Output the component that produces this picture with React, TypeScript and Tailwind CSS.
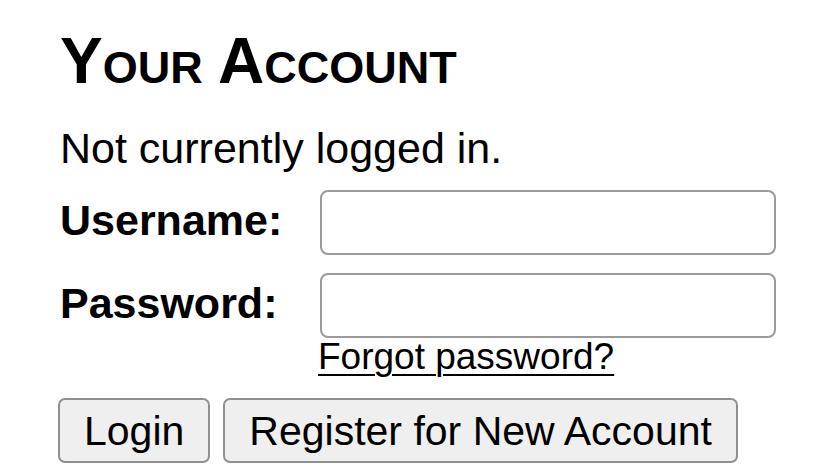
import React from "react";

export default function App() {
    return (
        <div className="min-h-screen bg-white text-black pl-[60px] pt-[29px] font-['Liberation_Sans',Arial,sans-serif]">
            <h1 className="text-[64px] leading-[64px] font-bold [font-variant:small-caps]">Your Account</h1>
            <p className="mt-[31px] text-[43px] leading-[48px]">Not currently logged in.</p>
            <form className="mt-[18px] flex flex-col">
                <div className="flex items-start">
                    <label className="w-[260px] pt-[6px] text-[43px] leading-[48px] font-bold">Username:</label>
                    <input type="text" className="w-[456px] h-[65px] border-2 border-[#9a9a9a] rounded-[8px] bg-white" />
                </div>
                <div className="flex items-start mt-[18px]">
                    <label className="w-[260px] pt-[6px] text-[43px] leading-[48px] font-bold">Password:</label>
                    <input type="password" className="w-[456px] h-[65px] border-2 border-[#9a9a9a] rounded-[8px] bg-white" />
                </div>
                <div className="pl-[258px] mt-[-1px]">
                    <a href="#" className="text-[37px] leading-[40px] underline underline-offset-[5px] decoration-2">Forgot password?</a>
                </div>
                <div className="flex gap-[13px] mt-[21px] ml-[-2px]">
                    <button type="button" className="h-[65px] px-[24px] border-2 border-[#8f8f8f] rounded-[7px] bg-[#efefef] text-[41px] leading-[46px]">Login</button>
                    <button type="button" className="h-[65px] px-[24px] border-2 border-[#8f8f8f] rounded-[7px] bg-[#efefef] text-[41px] leading-[46px]">Register for New Account</button>
                </div>
            </form>
        </div>
    );
}
